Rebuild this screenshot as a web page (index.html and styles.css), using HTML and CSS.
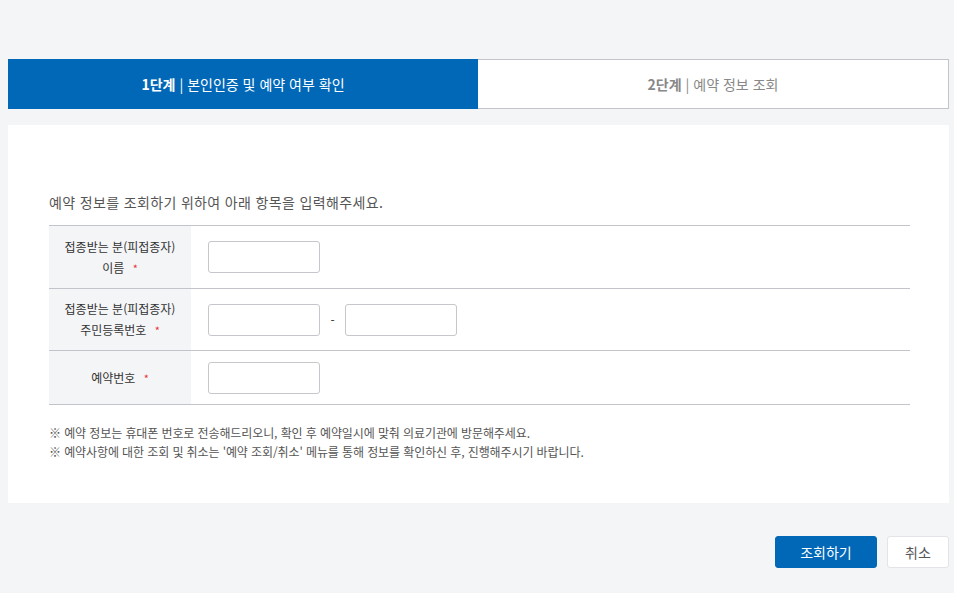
FILE: index.html
```html
<!DOCTYPE html>
<html lang="ko">
<head>
<meta charset="utf-8">
<link rel="stylesheet" href="styles.css">
</head>
<body>
<div class="page">
  <div class="tabs">
    <div class="tab active"><b>1단계</b> | 본인인증 및 예약 여부 확인</div>
    <div class="tab"><b>2단계</b> | 예약 정보 조회</div>
  </div>
  <div class="panel">
    <p class="intro">예약 정보를 조회하기 위하여 아래 항목을 입력해주세요.</p>
    <div class="table">
      <div class="row first">
        <div class="th"><div>접종받는 분(피접종자)<br>이름 <span class="req">*</span></div></div>
        <div class="td"><input class="inp" type="text"></div>
      </div>
      <div class="row">
        <div class="th"><div>접종받는 분(피접종자)<br>주민등록번호 <span class="req">*</span></div></div>
        <div class="td"><input class="inp" type="text"><span class="dash">-</span><input class="inp" type="text"></div>
      </div>
      <div class="row last">
        <div class="th"><div>예약번호 <span class="req">*</span></div></div>
        <div class="td"><input class="inp" type="text"></div>
      </div>
    </div>
    <ul class="notes">
      <li>※ 예약 정보는 휴대폰 번호로 전송해드리오니, 확인 후 예약일시에 맞춰 의료기관에 방문해주세요.</li>
      <li>※ 예약사항에 대한 조회 및 취소는 '예약 조회/취소' 메뉴를 통해 정보를 확인하신 후, 진행해주시기 바랍니다.</li>
    </ul>
  </div>
  <div class="actions">
    <button class="btn primary">조회하기</button>
    <button class="btn">취소</button>
  </div>
</div>
</body>
</html>
```
FILE: styles.css
```css
* { box-sizing: border-box; }
html, body { margin: 0; padding: 0; }
body {
  background: #f4f5f7;
  font-family: "Noto Sans CJK KR", "Noto Sans", sans-serif;
  color: #333;
}
.page { padding: 59px 5px 0 8px; }
.tabs { display: flex; height: 50px; }
.tab {
  flex: 1;
  display: flex;
  align-items: center;
  justify-content: center;
  font-size: 14px;
  color: #888;
  background: #fff;
  border: 1px solid #c3c4cb;
  border-left: none;
}
.tab b { font-weight: 700; color: #888; margin-right: 4px; }
.tab.active { background: #0068b7; color: #fff; border: none; }
.tab.active b { color: #fff; }
.panel {
  margin-top: 16px;
  background: #fff;
  padding: 67px 39px 28px 41px;
  height: 378px;
}
.intro { margin: 0 0 13px; font-size: 14px; color: #555; line-height: 20px; letter-spacing: 0.35px; }
.table { border-top: 1px solid #c3c4cb; }
.row { display: flex; border-bottom: 1px solid #c3c4cb; height: 62px; }
.row.first { height: 63px; }
.row.last { height: 54px; }
.th {
  width: 142px;
  background: #f4f5f7;
  display: flex;
  align-items: center;
  justify-content: center;
  text-align: center;
  font-size: 12px;
  line-height: 21px;
  color: #333;
}
.req { color: #e8323c; margin-left: 5px; font-size: 11px; }
.td { flex: 1; display: flex; align-items: center; padding-left: 17px; }
.inp {
  width: 112px;
  height: 32px;
  border: 1px solid #c6c6cc;
  border-radius: 3px;
  margin: 0;
  background: #fff;
}
.dash { width: 25px; text-align: center; font-size: 12px; color: #333; }
.notes { list-style: none; margin: 18px 0 0; padding: 0; font-size: 12px; color: #555; line-height: 19px; letter-spacing: -0.1px; }
.actions { display: flex; justify-content: flex-end; gap: 10px; margin-top: 33px; }
.btn {
  height: 32px;
  width: 62px;
  font-family: inherit;
  font-size: 14px;
  color: #555;
  background: #fff;
  border: 1px solid #e3e4e8;
  border-radius: 3px;
}
.btn.primary { width: 102px; background: #0068b7; border-color: #0068b7; color: #fff; }
```
